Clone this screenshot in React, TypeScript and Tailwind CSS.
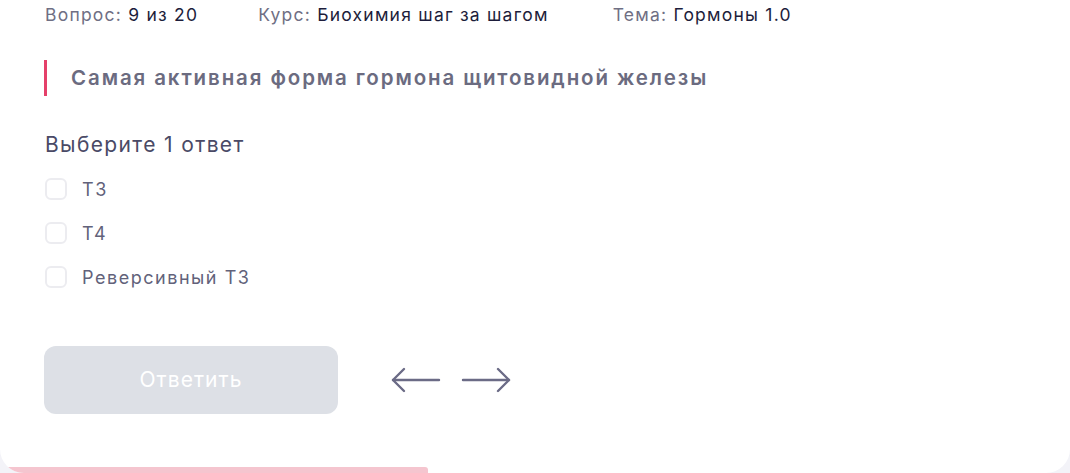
import * as React from "react";

const answers = ["T3", "T4", "Реверсивный T3"];

function Meta({ label, value }: { label: string; value: string }) {
  return (
    <span className="text-[17.5px] tracking-[0.07em] text-[#6f6f84]">
      {label}: <span className="text-[#1d1d3b]">{value}</span>
    </span>
  );
}

function Arrow({ dir }: { dir: "left" | "right" }) {
  return (
    <svg width="50" height="30" viewBox="0 0 50 30" fill="none" stroke="#6b6b86" strokeWidth="2.4" strokeLinecap="round" strokeLinejoin="round">
      {dir === "left" ? (
        <>
          <path d="M2 15H48" />
          <path d="M13 4L2 15L13 26" />
        </>
      ) : (
        <>
          <path d="M2 15H48" />
          <path d="M37 4L48 15L37 26" />
        </>
      )}
    </svg>
  );
}

export default function App() {
  const [selected, setSelected] = React.useState<number | null>(null);

  return (
    <div className="h-[473px] w-[1070px] overflow-hidden bg-[#f3f3f8]" style={{ fontFamily: "Inter, 'Noto Sans', sans-serif" }}>
      <div className="relative flex h-[473px] flex-col overflow-hidden rounded-b-[24px] bg-white pl-[44px]">
        <div className="flex h-[30px] items-center pl-[1px]">
          <Meta label="Вопрос" value="9 из 20" />
          <span className="w-[60px]" />
          <Meta label="Курс" value="Биохимия шаг за шагом" />
          <span className="w-[64px]" />
          <Meta label="Тема" value="Гормоны 1.0" />
        </div>

        <div className="mt-[30px] flex h-[36px] items-center border-l-[3px] border-[#e5406a] pl-[24px]">
          <h2 className="text-[20.5px] font-semibold tracking-[0.092em] text-[#6b6b80]">
            Самая активная форма гормона щитовидной железы
          </h2>
        </div>

        <p className="mt-[35px] pl-[1px] text-[21px] leading-[28px] tracking-[0.065em] text-[#4a4a66]">Выберите 1 ответ</p>

        <div className="mt-[19px] flex flex-col gap-[22px] pl-[1px]">
          {answers.map((a, i) => (
            <label key={a} className="flex h-[22px] cursor-pointer items-center gap-[15px]">
              <span
                onClick={() => setSelected(i)}
                className={
                  "h-[22px] w-[22px] rounded-[6px] border-2 " +
                  (selected === i ? "border-[#e5406a] bg-[#e5406a]" : "border-[#ececf0] bg-white")
                }
              />
              <span className="text-[18px] tracking-[0.085em] text-[#62627a]">{a}</span>
            </label>
          ))}
        </div>

        <div className="mt-[58px] flex items-center gap-[53px]">
          <button className="h-[68px] w-[294px] rounded-[12px] bg-[#dde0e6] text-[21px] tracking-[0.05em] text-white">
            Ответить
          </button>
          <div className="flex items-center gap-[20px]">
            <Arrow dir="left" />
            <Arrow dir="right" />
          </div>
        </div>

        <div className="absolute bottom-0 left-0 h-[6px] w-[428px] rounded-tr-[3px] bg-[#f5c5cf]" />
      </div>
    </div>
  );
}
